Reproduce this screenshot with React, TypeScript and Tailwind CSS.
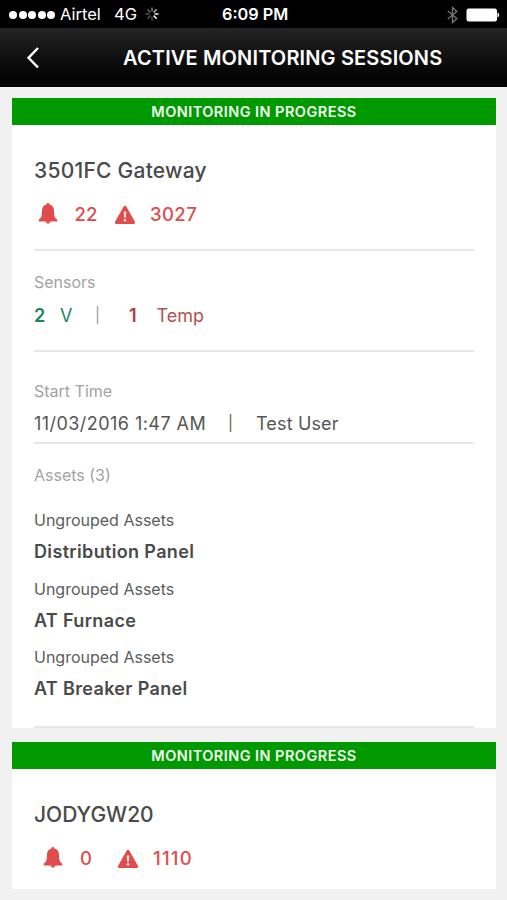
import type { ReactNode } from "react";
import { clsx } from "clsx";

type Session = {
  name: string;
  alarms: number;
  warnings: number;
};

const assets = ["Distribution Panel", "AT Furnace", "AT Breaker Panel"];

function BellIcon() {
  return (
    <svg viewBox="0 0 20 21" className="mb-[3px] h-[21px] w-5 shrink-0 fill-[#e04c4e]">
      <path d="M10 0c.9 0 1.400.6 1.500 1.500 2.800.8 4.400 2.900 4.500 5.900.1 3.800.4 5.900 1.200 7.300.4.8 1 1.300 2 1.800v1.900H.8v-1.900c1-.5 1.600-1 2-1.800.8-1.400 1.100-3.500 1.200-7.300.1-3 1.700-5.100 4.500-5.900C8.600.6 9.100 0 10 0Z" />
      <path d="M7.500 18.200h5c-.2 1.500-1.100 2.400-2.500 2.400s-2.300-.9-2.500-2.400Z" />
    </svg>
  );
}

function WarningIcon() {
  return (
    <svg viewBox="0 0 22 20" className="mb-px h-5 w-[22px] shrink-0">
      <path
        d="M11 2.200 19.600 17.500H2.400Z"
        className="fill-[#e04c4e] stroke-[#e04c4e]"
        strokeWidth="3"
        strokeLinejoin="round"
      />
      <path d="M9.700 6.400h2.600l-.5 6.300h-1.600Z" className="fill-[#fbe3e3]" />
      <circle cx="11" cy="15.300" r="1.300" className="fill-[#fbe3e3]" />
    </svg>
  );
}

function Spinner() {
  const spokes = [0.5, 0.7, 0.95, 1, 0.3, 0.3, 0.35, 0.4];
  return (
    <svg viewBox="-8 -8 16 16" className="mb-px h-4 w-4" stroke="#fff" strokeWidth="1.5" strokeLinecap="round">
      {spokes.map((opacity, i) => (
        <path key={i} d="M0-3V-6" opacity={opacity} transform={`rotate(${i * 45})`} />
      ))}
    </svg>
  );
}

function StatusBar() {
  return (
    <div className="flex h-7 items-center bg-black pt-px text-white">
      <div className="flex w-[222px] items-center pl-[9px]">
        <div className="flex gap-[1.500px]">
          {[0, 1, 2, 3, 4].map((dot) => (
            <span key={dot} className="size-2 rounded-full bg-white" />
          ))}
        </div>
        <span className="ml-[5px] w-[54px] text-[16.500px]">Airtel</span>
        <span className="w-[30px] text-[16.500px]">4G</span>
        <Spinner />
      </div>
      <span className="text-[16.300px] font-semibold">6:09 PM</span>
      <div className="ml-auto flex items-center gap-2 pr-[7px]">
        <svg viewBox="0 0 11 18" className="h-[18px] w-[11px]" fill="none" stroke="#777" strokeWidth="1.300">
          <path d="M.8 5 9.800 12.500 5.500 16.500V1.500L9.800 5.500.8 13" />
        </svg>
        <svg viewBox="0 0 34 14" className="h-3.5 w-[34px] fill-white">
          <rect x=".5" y=".5" width="30.500" height="13" rx="2.200" />
          <path d="M31.500 4.500c2.300.7 2.300 4.300 0 5Z" />
        </svg>
      </div>
    </div>
  );
}

function NavBar() {
  return (
    <header className="flex h-[59px] items-center bg-linear-to-b from-[#242424] to-[#020202] text-white">
      <svg viewBox="0 0 14 24" className="ml-[26px] h-6 w-3.5" fill="none" stroke="currentColor" strokeWidth="2.400">
        <path d="M12 2 2.500 11.800 12 21.500" />
      </svg>
      <h1 className="ml-[83px] whitespace-nowrap text-[20px] font-semibold tracking-[0.150px]">
        ACTIVE MONITORING SESSIONS
      </h1>
    </header>
  );
}

function Rule({ className }: { className?: string }) {
  return <hr className={clsx("h-0.5 border-0 bg-[#e6e6e6]", className)} />;
}

function Label({ className, children }: { className?: string; children: ReactNode }) {
  return <p className={clsx("text-[16px] leading-6 text-[#a3a3a3]", className)}>{children}</p>;
}

function SessionCard({ session, inset, children }: { session: Session; inset?: boolean; children?: ReactNode }) {
  return (
    <section className="bg-white">
      <div className="flex h-[27px] items-center justify-center bg-[#009a00] text-[14.500px] font-semibold tracking-[0.450px] text-[#f2fff2]">
        MONITORING IN PROGRESS
      </div>
      <div className="px-[22px] pt-[31px]">
        <h2 className={clsx("text-[21px] leading-[30px] font-medium text-[#4a4a4a]", !inset && "tracking-[0.250px]")}>
          {session.name}
        </h2>
        <div
          className={clsx(
            "mt-3.5 flex h-[30px] items-center text-[18.500px] font-medium text-[#e04c4e]",
            inset ? "pl-[9px]" : "pl-[3.500px]"
          )}
        >
          <BellIcon />
          <span className={clsx("ml-[17px]", inset ? "w-[37px]" : "w-[39.500px]")}>{session.alarms}</span>
          <WarningIcon />
          <span className={clsx("ml-3.5", inset ? "tracking-[1.200px]" : "tracking-[0.400px]")}>
            {session.warnings}
          </span>
        </div>
        {children}
      </div>
    </section>
  );
}

export default function App() {
  return (
    <div className="h-[900px] w-[507px] overflow-hidden bg-[#f1f1f1] font-['Inter',sans-serif]">
      <StatusBar />
      <NavBar />
      <main className="flex flex-col gap-3.5 pt-[11px] pr-[11px] pl-3">
        <SessionCard session={{ name: "3501FC Gateway", alarms: 22, warnings: 3027 }}>
          <Rule className="mt-[19px]" />
          <Label className="mt-[19px]">Sensors</Label>
          <div className="mt-[9px] flex h-6 items-center text-[18px]">
            <span className="w-[26px] font-semibold text-[#1c845c]">2</span>
            <span className="w-[35px] text-[#1c845c]">V</span>
            <span className="w-[34px] text-[15px] text-[#999]">|</span>
            <span className="w-[27.500px] font-semibold text-[#ad3f3d]">1</span>
            <span className="text-[#b5524f]">Temp</span>
          </div>
          <Rule className="mt-[23px]" />
          <Label className="mt-[27px]">Start Time</Label>
          <div className="mt-2 flex h-6 items-center text-[18px] text-[#555]">
            <span className="w-[194px] tracking-[0.450px]">11/03/2016 1:47 AM</span>
            <span className="w-[28px] text-[15px]">|</span>
            <span className="tracking-[0.150px]">Test User</span>
          </div>
          <Rule className="mt-[7px]" />
          <Label className="mt-[19px]">Assets (3)</Label>
          <ul className="mt-[21px]">
            {assets.map((asset) => (
              <li key={asset} className="h-[68.700px]">
                <p className="text-[16px] leading-6 text-[#5c5c5c]">Ungrouped Assets</p>
                <p className="mt-2 text-[18px] leading-6 font-semibold tracking-[0.350px] text-[#4a4a4a]">{asset}</p>
              </li>
            ))}
          </ul>
          <Rule className="mt-3" />
        </SessionCard>
        <SessionCard session={{ name: "JODYGW20", alarms: 0, warnings: 1110 }} inset>
          <div className="h-[15px]" />
        </SessionCard>
      </main>
    </div>
  );
}
